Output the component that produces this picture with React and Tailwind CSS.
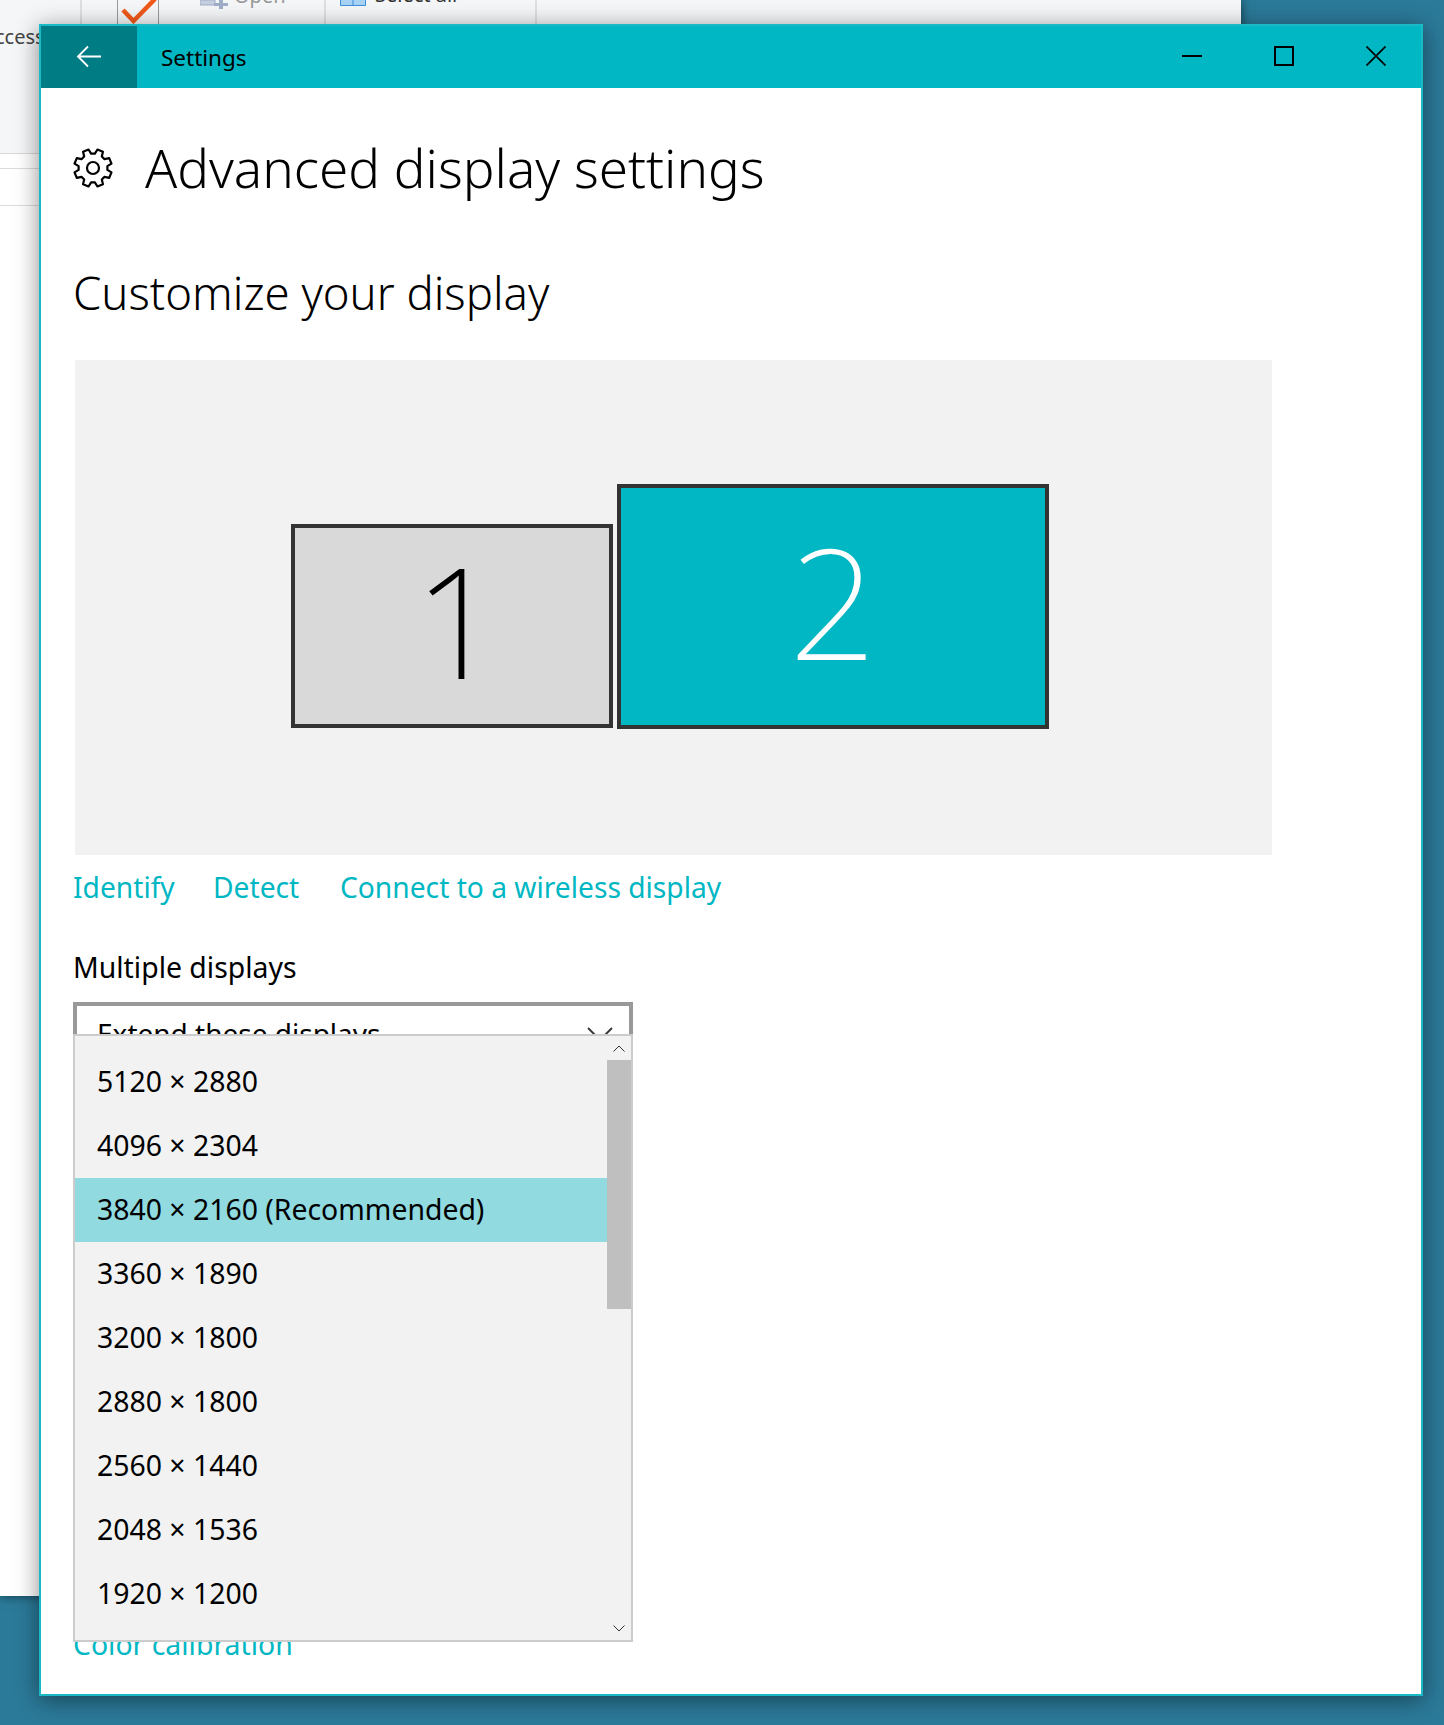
import React from "react";

const items = ["5120 × 2880","4096 × 2304","3840 × 2160 (Recommended)","3360 × 1890","3200 × 1800","2880 × 1800","2560 × 1440","2048 × 1536","1920 × 1200"];
const F = "[font-family:'Noto_Sans',sans-serif]";

function gearPath() {
  const pts = [];
  const c = 20;
  for (let i = 0; i < 8; i++) {
    const a = 22.5 + i * 45;
    [[a - 15, 14.5], [a - 9, 19], [a + 9, 19], [a + 15, 14.5]].forEach(([d, r]) => {
      const t = ((d - 90) * Math.PI) / 180;
      pts.push(`${(c + r * Math.cos(t)).toFixed(2)} ${(c + r * Math.sin(t)).toFixed(2)}`);
    });
  }
  return "M" + pts.join("L") + "Z";
}

function Gear() {
  return (
    <svg width="40" height="40" viewBox="0 0 40 40" fill="none" stroke="#000" strokeWidth="2.200">
      <path d={gearPath()} strokeLinejoin="round" />
      <circle cx="20" cy="20" r="6" />
    </svg>
  );
}

export default function App() {
  return (
    <div className={`relative w-[1444px] h-[1725px] overflow-hidden bg-[#2b7a99] ${F}`}>
      {/* background window */}
      <div className="absolute left-0 top-0 w-[1241px] h-[1596px] bg-white shadow-[0_0_10px_rgba(0,0,0,0.55)]">
        <div className="h-[154px] bg-[#f5f6f7] border-b border-[#d8d8d8]" />
        <div className="h-[15px] border-b border-[#dcdcdc]" />
        <div className="h-[37px] border-b border-[#dcdcdc]" />
        <div className="absolute left-0 top-[25px] text-[20px] text-[#444] leading-6 -ml-[5px]">ccess</div>
      </div>
      <div className="absolute left-[80px] top-0 h-[24px] w-[2px] bg-[#dfdfdf]" />
      <div className="absolute left-[117px] top-0 h-[24px] w-[42px] border-x border-[#9a9a9a] overflow-hidden">
        <svg width="40" height="24" viewBox="0 0 40 24" fill="none" stroke="#f0591a" strokeWidth="4.500"><path d="M5 10l10.500 11L37 -1" /></svg>
      </div>
      <div className="absolute left-[324px] top-0 h-[24px] w-[2px] bg-[#dfdfdf]" />
      <div className="absolute left-[535px] top-0 h-[24px] w-[2px] bg-[#dfdfdf]" />
      <div className="absolute left-[234px] -top-[16px] text-[20px] text-[#999] leading-6">Open</div>
      <div className="absolute left-[375px] -top-[17px] text-[20px] text-[#333] leading-6">Select all</div>
      <svg className="absolute left-[200px] top-0" width="28" height="9" viewBox="0 0 28 9"><path d="M0 0h15v5H0z" fill="#c6cfe0" stroke="#9fadc8" /><path d="M19 0h4v3h5v3h-5v3h-4V6h-5V3h5z" fill="#9fadc8" /></svg>
      <svg className="absolute left-[340px] top-0" width="26" height="6" viewBox="0 0 26 6"><path d="M.5 0v5.500h25V0M13 0v5.500" fill="#a9d3f5" stroke="#3f8fdc" /></svg>

      {/* settings window */}
      <div className="absolute left-[39px] top-[24px] w-[1384px] h-[1672px] bg-white border-2 border-[#1ab9c6] shadow-[0_4px_22px_rgba(0,0,0,0.45)] flex flex-col">
        <div className="h-[62px] shrink-0 bg-[#00b7c3] flex items-stretch">
          <div className="w-[96px] bg-[#007c84] flex items-center justify-center">
            <svg width="26" height="24" viewBox="0 0 26 24" fill="none" stroke="#fff" strokeWidth="1.800"><path d="M25 11.500H2M12 1.500 2 11.500l10 10" /></svg>
          </div>
          <div className="ml-6 flex items-center text-[22.500px] text-black pt-[2px]">Settings</div>
          <div className="ml-auto flex items-center pb-[2px]">
            <svg className="mr-[72px]" width="20" height="20" viewBox="0 0 20 20"><path d="M0 10h20" stroke="#000" strokeWidth="2" /></svg>
            <svg className="mr-[72px]" width="20" height="20" viewBox="0 0 20 20" fill="none"><path d="M1 1h18v18H1z" stroke="#000" strokeWidth="2" /></svg>
            <svg className="mr-[35px]" width="20" height="20" viewBox="0 0 20 20"><path d="M.5.500l19 19M19.500.500l-19 19" stroke="#000" strokeWidth="1.700" /></svg>
          </div>
        </div>
        <div className="relative flex-1 pl-[32px]">
          <div className="flex items-center h-[64px] mt-[48px]">
            <Gear />
            <div className="ml-[32px] pb-[2px] text-[53px] font-light text-black leading-none">Advanced display settings</div>
          </div>
          <div className="mt-[68px] h-[48px] text-[45.500px] font-light text-black leading-[48px]">Customize your display</div>
          <div className="mt-[44px] ml-[2px] w-[1197px] h-[495px] bg-[#f2f2f2] flex items-end pb-[126px] pl-[216px] gap-[4px]">
            <div className="w-[322px] h-[204px] mb-px pb-[14px] pl-[12px] bg-[#d9d9d9] border-4 border-[#333] flex items-center justify-center text-[154px] font-[250] leading-none text-black">1</div>
            <div className="w-[432px] h-[245px] pb-[14px] bg-[#00b7c3] border-4 border-[#333] flex items-center justify-center text-[154px] font-[250] leading-none text-white">2</div>
          </div>
          <div className="flex mt-[16px] h-[32px] text-[28.200px] leading-8 text-[#00b7c3]">
            <span className="w-[140px]">Identify</span>
            <span className="w-[127px]">Detect</span>
            <span>Connect to a wireless display</span>
          </div>
          <div className="mt-[48px] h-[32px] text-[28.400px] leading-8 text-black">Multiple displays</div>
          <div className="mt-[19px] w-[560px] h-[64px] bg-white border-4 border-[#999] flex items-center pl-[20px] pr-[16px] pb-[3px] justify-between text-[28px] text-black">
            <span>Extend these displays</span>
            <svg className="mt-[3px]" width="26" height="14" viewBox="0 0 26 14" fill="none" stroke="#333" strokeWidth="1.800"><path d="M1 1l12 12L25 1" /></svg>
          </div>
          <div className="mt-[562px] h-[32px] text-[28.400px] leading-8 text-[#00b7c3]">Color calibration</div>

          {/* dropdown popup */}
          <div className="absolute left-[32px] top-[946px] w-[560px] h-[608px] bg-[#f2f2f2] border-2 border-[#ccc] flex">
            <div className="w-[532px] pt-[14px]">
              {items.map((t, i) => (
                <div key={t} className={`h-[64px] pl-[22px] pb-[2px] flex items-center text-[28.400px] text-black ${i === 2 ? "bg-[#90dae0]" : ""}`}>{t}</div>
              ))}
            </div>
            <div className="w-[24px] flex flex-col">
              <div className="h-[24px] flex items-center justify-center">
                <svg width="12" height="7" viewBox="0 0 12 7" fill="none" stroke="#333"><path d="M.5 6.500 6 1l5.500 5.500" /></svg>
              </div>
              <div className="h-[249px] bg-[#bfbfbf]" />
              <div className="mt-auto h-[24px] flex items-center justify-center">
                <svg width="12" height="7" viewBox="0 0 12 7" fill="none" stroke="#333"><path d="M.5.500 6 6l5.500-5.500" /></svg>
              </div>
            </div>
          </div>
        </div>
      </div>
    </div>
  );
}
